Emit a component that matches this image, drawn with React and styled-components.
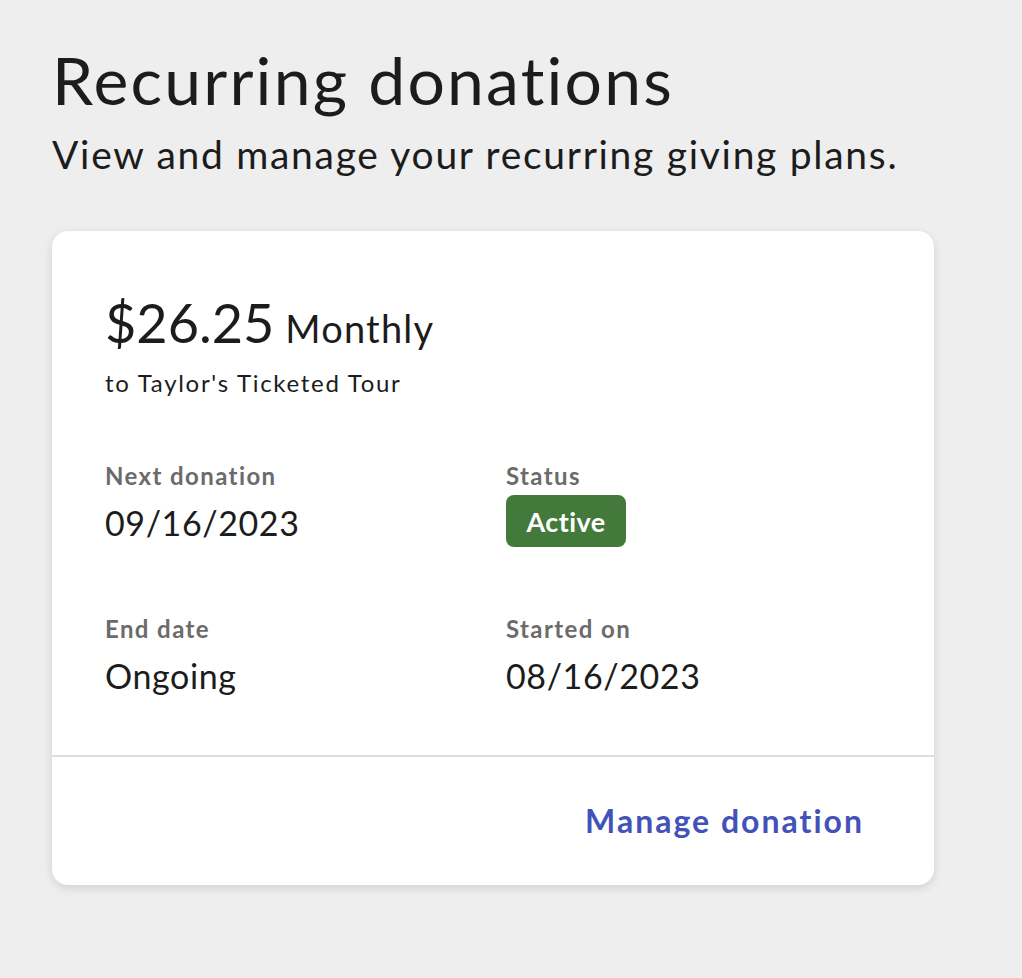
import React from 'react'
import styled, { createGlobalStyle } from 'styled-components'

const GlobalStyle = createGlobalStyle`
  html, body {
    margin: 0;
    padding: 0;
    background: #eeeeee;
  }
  body {
    font-family: Lato, "Noto Sans", sans-serif;
    color: #1c1c1c;
  }
`

const Page = styled.main`
  padding: 42px 52px 40px 52px;
  width: 882px;
`

const Title = styled.h1`
  margin: 0;
  font-size: 66px;
  font-weight: 400;
  line-height: 76px;
  letter-spacing: 2.2px;
`

const Subtitle = styled.p`
  margin: 12px 0 0 0;
  font-size: 39px;
  line-height: 48px;
  letter-spacing: 1.7px;
`

const Card = styled.section`
  margin-top: 53px;
  background: #ffffff;
  border-radius: 16px;
  box-shadow: 0 3px 10px rgba(0, 0, 0, 0.12);
  overflow: hidden;
`

const Body = styled.div`
  padding: 60px 53px 58px 53px;
  border-bottom: 2px solid #dedede;
`

const AmountLine = styled.div`
  display: flex;
  align-items: baseline;
  gap: 11px;
  line-height: 64px;
`

const Amount = styled.span`
  font-size: 54px;
`

const Period = styled.span`
  font-size: 38px;
  letter-spacing: 1.2px;
`

const Recipient = styled.div`
  margin-top: 7px;
  font-size: 24px;
  line-height: 32px;
  letter-spacing: 1.7px;
`

const Grid = styled.div`
  margin-top: 61px;
  display: grid;
  grid-template-columns: 401px 1fr;
  row-gap: 66px;
`

const Field = styled.div`
  display: flex;
  flex-direction: column;
  align-items: flex-start;
`

const Label = styled.div`
  font-size: 24px;
  line-height: 32px;
  font-weight: 700;
  letter-spacing: 1.4px;
  color: #6b6b6b;
`

const Value = styled.div`
  margin-top: 10px;
  font-size: 34px;
  line-height: 42px;
  letter-spacing: 0.6px;
`

const Badge = styled.span`
  margin-top: 3px;
  display: inline-flex;
  align-items: center;
  justify-content: center;
  width: 120px;
  height: 52px;
  border-radius: 8px;
  background: #437a3b;
  color: #ffffff;
  font-size: 27px;
  font-weight: 700;
  letter-spacing: 0.4px;
  box-sizing: border-box;
`

const Footer = styled.div`
  display: flex;
  justify-content: flex-end;
  align-items: center;
  height: 128px;
  padding: 0 70px;
`

const ManageLink = styled.a`
  color: #4352b8;
  font-size: 32px;
  line-height: 40px;
  font-weight: 700;
  letter-spacing: 2px;
  text-decoration: none;
  cursor: pointer;
`

const fields = [
  { label: 'Next donation', value: '09/16/2023' },
  { label: 'Status', badge: 'Active' },
  { label: 'End date', value: 'Ongoing' },
  { label: 'Started on', value: '08/16/2023' },
]

export default function App() {
  return (
    <>
      <GlobalStyle />
      <Page>
        <Title>Recurring donations</Title>
        <Subtitle>View and manage your recurring giving plans.</Subtitle>
        <Card>
          <Body>
            <AmountLine>
              <Amount>$26.25</Amount>
              <Period>Monthly</Period>
            </AmountLine>
            <Recipient>to Taylor's Ticketed Tour</Recipient>
            <Grid>
              {fields.map((f) => (
                <Field key={f.label}>
                  <Label>{f.label}</Label>
                  {f.badge ? <Badge>{f.badge}</Badge> : <Value>{f.value}</Value>}
                </Field>
              ))}
            </Grid>
          </Body>
          <Footer>
            <ManageLink>Manage donation</ManageLink>
          </Footer>
        </Card>
      </Page>
    </>
  )
}
